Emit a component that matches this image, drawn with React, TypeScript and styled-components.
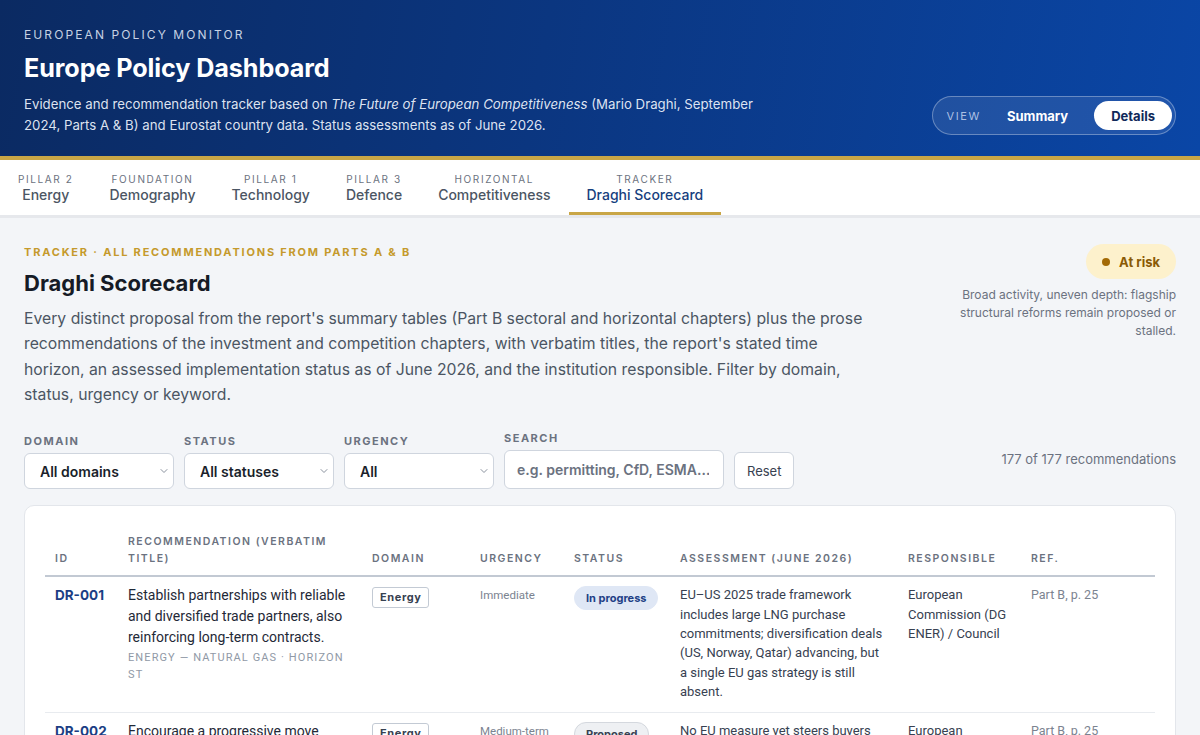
import React from "react";
import styled, { createGlobalStyle } from "styled-components";

const GlobalStyle = createGlobalStyle`
  * { box-sizing: border-box; }
  html, body { margin: 0; padding: 0; }
  body {
    background: #f3f5f8;
    font-family: Inter, "Noto Sans", "Liberation Sans", sans-serif;
    color: #111827;
    -webkit-font-smoothing: antialiased;
  }
`;

/* ---------- Header ---------- */

const Header = styled.header`
  display: flex;
  align-items: flex-end;
  justify-content: space-between;
  padding: 28px 24px 20px;
  background: linear-gradient(100deg, #0b2a62 0%, #0b3680 45%, #0a46a6 100%);
  border-bottom: 4px solid #c9a646;
  color: #ffffff;
`;

const Brand = styled.div`
  display: flex;
  flex-direction: column;
`;

const Kicker = styled.div`
  font-size: 12px;
  line-height: 14px;
  letter-spacing: 2.1px;
  text-transform: uppercase;
  color: rgba(226, 234, 248, 0.88);
`;

const Title = styled.h1`
  margin: 10px 0 0;
  font-size: 25.2px;
  line-height: 32px;
  font-weight: 700;
  letter-spacing: -0.1px;
`;

const Lede = styled.p`
  margin: 10px 0 0;
  max-width: 760px;
  font-size: 13.25px;
  line-height: 21px;
  color: rgba(234, 240, 250, 0.95);
`;

const ViewToggle = styled.div`
  display: flex;
  align-items: center;
  gap: 8px;
  margin-bottom: 1px;
  padding: 4px 3px 4px 14px;
  border-radius: 999px;
  border: 1px solid rgba(255, 255, 255, 0.32);
  background: rgba(255, 255, 255, 0.09);
`;

const ToggleLabel = styled.span`
  font-size: 11px;
  letter-spacing: 1.6px;
  color: rgba(210, 222, 245, 0.8);
`;

const ToggleButton = styled.button<{ $active?: boolean }>`
  border: 0;
  border-radius: 999px;
  height: 29px;
  font-family: inherit;
  font-size: 13px;
  font-weight: 700;
  cursor: pointer;
  background: ${(p) => (p.$active ? "#ffffff" : "transparent")};
  color: ${(p) => (p.$active ? "#10295a" : "#ffffff")};
  padding: ${(p) => (p.$active ? "0 17px" : "0 18px")};
`;

/* ---------- Tabs ---------- */

const TabBar = styled.nav`
  display: flex;
  background: #ffffff;
  border-bottom: 3px solid #e6e8ec;
`;

const Tab = styled.a<{ $active?: boolean }>`
  display: flex;
  flex-direction: column;
  align-items: center;
  padding: 13px 18px 8px;
  border-bottom: 3px solid ${(p) => (p.$active ? "#c9a646" : "transparent")};
  text-decoration: none;
  cursor: pointer;
`;

const TabKicker = styled.span`
  font-size: 10px;
  line-height: 13px;
  letter-spacing: 1.6px;
  text-transform: uppercase;
  color: #6b7280;
`;

const TabName = styled.span<{ $active?: boolean }>`
  font-size: 14px;
  line-height: 18px;
  font-weight: 500;
  color: ${(p) => (p.$active ? "#173f7e" : "#4b5563")};
`;

/* ---------- Main ---------- */

const Main = styled.main`
  padding: 26px 24px 24px;
`;

const Intro = styled.section`
  display: flex;
  justify-content: space-between;
  align-items: flex-start;
  gap: 24px;
`;

const IntroText = styled.div`
  max-width: 850px;
`;

const Eyebrow = styled.div`
  font-size: 11px;
  line-height: 16px;
  font-weight: 700;
  letter-spacing: 1.8px;
  text-transform: uppercase;
  color: #c59a2c;
`;

const SectionTitle = styled.h2`
  margin: 8px 0 0;
  font-size: 22px;
  line-height: 30px;
  font-weight: 700;
  color: #161b26;
`;

const Description = styled.p`
  margin: 8px 0 0;
  font-size: 15.75px;
  line-height: 25.3px;
  color: #4b5563;
`;

const Verdict = styled.aside`
  display: flex;
  flex-direction: column;
  align-items: flex-end;
  width: 232px;
  flex-shrink: 0;
`;

const RiskPill = styled.div`
  display: flex;
  align-items: center;
  gap: 9px;
  height: 35px;
  padding: 0 16px;
  border-radius: 999px;
  background: #fdf1cc;
  color: #8a5a06;
  font-size: 13px;
  font-weight: 700;
`;

const Dot = styled.span`
  width: 8px;
  height: 8px;
  border-radius: 50%;
  background: #a36a06;
`;

const VerdictNote = styled.p`
  margin: 7px 0 0;
  text-align: right;
  font-size: 12px;
  line-height: 18px;
  color: #6b7280;
`;

/* ---------- Filters ---------- */

const Filters = styled.div`
  display: flex;
  align-items: flex-end;
  gap: 10px;
  margin-top: 24px;
`;

const Field = styled.label`
  display: flex;
  flex-direction: column;
  gap: 5px;
`;

const FieldLabel = styled.span`
  font-size: 11px;
  line-height: 14px;
  font-weight: 700;
  letter-spacing: 1.5px;
  text-transform: uppercase;
  color: #6b7280;
`;

const SelectWrap = styled.div`
  position: relative;
  width: 150px;
`;

const Select = styled.select`
  appearance: none;
  width: 100%;
  height: 36px;
  padding: 0 28px 0 15px;
  border: 1px solid #cfd5de;
  border-radius: 6px;
  background: #ffffff;
  font-family: inherit;
  font-size: 14px;
  font-weight: 600;
  color: #1a1f2b;
`;

const Chevron = styled.svg`
  position: absolute;
  right: 5px;
  top: 14px;
  pointer-events: none;
`;

const SearchInput = styled.input`
  width: 220px;
  height: 39px;
  padding: 0 14px 0 12px;
  border: 1px solid #cfd5de;
  border-radius: 6px;
  background: #ffffff;
  font-family: inherit;
  font-size: 14px;
  font-weight: 600;
  color: #1a1f2b;
  &::placeholder { color: #6b7280; opacity: 1; }
`;

const ResetButton = styled.button`
  height: 37px;
  padding: 0 12px;
  border: 1px solid #cfd5de;
  border-radius: 6px;
  background: #ffffff;
  font-family: inherit;
  font-size: 13px;
  color: #374151;
  cursor: pointer;
`;

const Count = styled.div`
  margin-left: auto;
  align-self: center;
  margin-bottom: 3px;
  font-size: 13px;
  color: #6b7280;
`;

/* ---------- Table ---------- */

const Card = styled.div`
  margin-top: 16px;
  padding: 19px 20px 18px;
  background: #ffffff;
  border: 1px solid #e3e6eb;
  border-radius: 10px;
`;

const Table = styled.table`
  width: 100%;
  table-layout: fixed;
  border-collapse: collapse;
`;

const Th = styled.th<{ $w: number }>`
  width: ${(p) => p.$w}px;
  padding: 8px 10px;
  text-align: left;
  vertical-align: bottom;
  font-size: 10.5px;
  line-height: 17px;
  font-weight: 600;
  letter-spacing: 1.5px;
  text-transform: uppercase;
  color: #6b7280;
  border-bottom: 2px solid #c2c9d3;
`;

const Row = styled.tr`
  border-bottom: 1px solid #e8ebef;
`;

const Td = styled.td`
  padding: 8px 10px 10px;
  vertical-align: top;
  font-family: Roboto, "Liberation Sans", sans-serif;
  font-size: 13px;
  line-height: 19.4px;
  color: #374151;
`;

const Id = styled.span`
  font-family: Inter, sans-serif;
  font-size: 13.5px;
  line-height: 21px;
  font-weight: 700;
  color: #1b3e84;
`;

const RecTitle = styled.div`
  font-size: 14px;
  line-height: 21px;
  color: #1f2937;
`;

const Meta = styled.div`
  margin-top: 1px;
  font-size: 11px;
  line-height: 17px;
  letter-spacing: 1.1px;
  text-transform: uppercase;
  color: #9099a6;
`;

const DomainTag = styled.span`
  display: inline-block;
  margin-top: 2px;
  padding: 2px 7px;
  border: 1px solid #c3cad4;
  border-radius: 3px;
  font-family: Inter, sans-serif;
  font-size: 11px;
  line-height: 15px;
  font-weight: 700;
  letter-spacing: 0.6px;
  color: #374151;
`;

const Urgency = styled.span`
  font-size: 11.5px;
  color: #7b8390;
`;

const StatusPill = styled.span<{ $tone: "progress" | "proposed" }>`
  display: inline-block;
  margin-top: 1px;
  padding: 4px 11px;
  border-radius: 999px;
  font-family: Inter, sans-serif;
  font-size: 11px;
  line-height: 14px;
  font-weight: 700;
  white-space: nowrap;
  background: ${(p) => (p.$tone === "progress" ? "#dfe7f5" : "#eef0f3")};
  color: ${(p) => (p.$tone === "progress" ? "#1e3f86" : "#374151")};
  border: 1px solid ${(p) => (p.$tone === "progress" ? "#dfe7f5" : "#d4d8de")};
`;

const Ref = styled.span`
  font-size: 12.5px;
  color: #7b8390;
`;

type Rec = {
  id: string;
  title: string;
  meta: string;
  domain: string;
  urgency: string;
  status: string;
  tone: "progress" | "proposed";
  assessment: string;
  responsible: string;
  ref: string;
};

const recommendations: Rec[] = [
  {
    id: "DR-001",
    title: "Establish partnerships with reliable and diversified trade partners, also reinforcing long-term contracts.",
    meta: "Energy — Natural gas · Horizon ST",
    domain: "Energy",
    urgency: "Immediate",
    status: "In progress",
    tone: "progress",
    assessment:
      "EU–US 2025 trade framework includes large LNG purchase commitments; diversification deals (US, Norway, Qatar) advancing, but a single EU gas strategy is still absent.",
    responsible: "European Commission (DG ENER) / Council",
    ref: "Part B, p. 25",
  },
  {
    id: "DR-002",
    title: "Encourage a progressive move away from spot-market gas pricing towards long-term contracts.",
    meta: "Energy — Natural gas · Horizon MT",
    domain: "Energy",
    urgency: "Medium-term",
    status: "Proposed",
    tone: "proposed",
    assessment:
      "No EU measure yet steers buyers towards long-term contracts; spot-indexed LNG still sets the marginal price.",
    responsible: "European Commission / Member States",
    ref: "Part B, p. 25",
  },
];

const tabs = [
  { kicker: "Pillar 2", name: "Energy" },
  { kicker: "Foundation", name: "Demography" },
  { kicker: "Pillar 1", name: "Technology" },
  { kicker: "Pillar 3", name: "Defence" },
  { kicker: "Horizontal", name: "Competitiveness" },
  { kicker: "Tracker", name: "Draghi Scorecard", active: true },
];

const ChevronIcon = () => (
  <Chevron width="10" height="8" viewBox="0 0 10 8">
    <path d="M2 2.5 L5 5.5 L8 2.5" fill="none" stroke="#8a929e" strokeWidth="1" strokeLinecap="round" />
  </Chevron>
);

const Dropdown = ({ label, value }: { label: string; value: string }) => (
  <Field>
    <FieldLabel>{label}</FieldLabel>
    <SelectWrap>
      <Select defaultValue={value}>
        <option>{value}</option>
      </Select>
      <ChevronIcon />
    </SelectWrap>
  </Field>
);

export default function App() {
  return (
    <>
      <GlobalStyle />
      <Header>
        <Brand>
          <Kicker>European Policy Monitor</Kicker>
          <Title>Europe Policy Dashboard</Title>
          <Lede>
            Evidence and recommendation tracker based on <em>The Future of European Competitiveness</em> (Mario
            Draghi, September 2024, Parts A &amp; B) and Eurostat country data. Status assessments as of June 2026.
          </Lede>
        </Brand>
        <ViewToggle>
          <ToggleLabel>VIEW</ToggleLabel>
          <ToggleButton>Summary</ToggleButton>
          <ToggleButton $active>Details</ToggleButton>
        </ViewToggle>
      </Header>

      <TabBar>
        {tabs.map((t) => (
          <Tab key={t.name} $active={t.active}>
            <TabKicker>{t.kicker}</TabKicker>
            <TabName $active={t.active}>{t.name}</TabName>
          </Tab>
        ))}
      </TabBar>

      <Main>
        <Intro>
          <IntroText>
            <Eyebrow>Tracker · All recommendations from Parts A &amp; B</Eyebrow>
            <SectionTitle>Draghi Scorecard</SectionTitle>
            <Description>
              Every distinct proposal from the report's summary tables (Part B sectoral and horizontal chapters) plus
              the prose recommendations of the investment and competition chapters, with verbatim titles, the report's
              stated time horizon, an assessed implementation status as of June 2026, and the institution responsible.
              Filter by domain, status, urgency or keyword.
            </Description>
          </IntroText>
          <Verdict>
            <RiskPill>
              <Dot />
              At risk
            </RiskPill>
            <VerdictNote>
              Broad activity, uneven depth: flagship structural reforms remain proposed or stalled.
            </VerdictNote>
          </Verdict>
        </Intro>

        <Filters>
          <Dropdown label="Domain" value="All domains" />
          <Dropdown label="Status" value="All statuses" />
          <Dropdown label="Urgency" value="All" />
          <Field>
            <FieldLabel>Search</FieldLabel>
            <SearchInput placeholder="e.g. permitting, CfD, ESMA…" />
          </Field>
          <ResetButton>Reset</ResetButton>
          <Count>177 of 177 recommendations</Count>
        </Filters>

        <Card>
          <Table>
            <thead>
              <tr>
                <Th $w={73}>ID</Th>
                <Th $w={244}>Recommendation (verbatim title)</Th>
                <Th $w={108}>Domain</Th>
                <Th $w={94}>Urgency</Th>
                <Th $w={106}>Status</Th>
                <Th $w={228}>Assessment (June 2026)</Th>
                <Th $w={123}>Responsible</Th>
                <Th $w={134}>Ref.</Th>
              </tr>
            </thead>
            <tbody>
              {recommendations.map((r) => (
                <Row key={r.id}>
                  <Td>
                    <Id>{r.id}</Id>
                  </Td>
                  <Td>
                    <RecTitle>{r.title}</RecTitle>
                    <Meta>{r.meta}</Meta>
                  </Td>
                  <Td>
                    <DomainTag>{r.domain}</DomainTag>
                  </Td>
                  <Td>
                    <Urgency>{r.urgency}</Urgency>
                  </Td>
                  <Td>
                    <StatusPill $tone={r.tone}>{r.status}</StatusPill>
                  </Td>
                  <Td>{r.assessment}</Td>
                  <Td>{r.responsible}</Td>
                  <Td>
                    <Ref>{r.ref}</Ref>
                  </Td>
                </Row>
              ))}
            </tbody>
          </Table>
        </Card>
      </Main>
    </>
  );
}
